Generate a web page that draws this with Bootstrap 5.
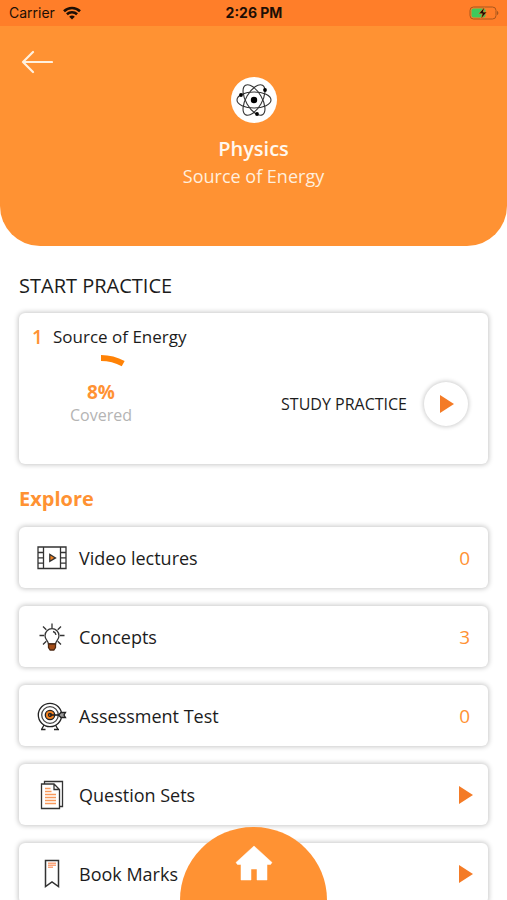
<!DOCTYPE html>
<html lang="en">
<head>
<meta charset="utf-8">
<meta name="viewport" content="width=device-width, initial-scale=1">
<title>Physics – Source of Energy</title>
<link href="https://cdn.jsdelivr.net/npm/bootstrap@5.3.0/dist/css/bootstrap.min.css" rel="stylesheet">
<style>
:root { --brand: #ff9233; --brand-dark: #ff7e29; --ink: #1c1c1c; }
body { font-family: "Open Sans", "Noto Sans", sans-serif; color: var(--ink); background: #fff; }
a { color: inherit; text-decoration: none; }
.text-brand { color: var(--brand); }
.status-bar { background: var(--brand-dark); height: 26px; padding: 0 8px 0 9px; font: 14px/26px Inter, sans-serif; color: #1d0f05; }
.hero { background: var(--brand); border-radius: 0 0 40px 40px; height: 246px; color: #fff; }
.hero-back { padding: 24px 21px 0; height: 51px; }
.subject-logo { width: 46px; height: 46px; border-radius: 50%; background: #fff; }
.subject-name { font-size: 20px; line-height: 28px; font-weight: 600; margin-top: 12px; color: #fff8ee; }
.subject-topic { font-size: 18px; line-height: 26px; color: #ffeedd; }
.page-main { padding: 24px 18px 16px; }
.section-title { font-size: 20px; line-height: 32px; margin: 0; padding-left: 1px; }
.tile { border: 0; border-radius: 6px; box-shadow: 0 0 5px 1px rgba(0,0,0,.22); background: #fff; margin: 0 1px; }
.practice { height: 151px; margin-top: 11px; margin-bottom: 19px; padding: 9px 20px 0 13px; }
.topic-line { font-size: 17px; line-height: 30px; }
.topic-number { font-size: 19px; font-weight: 600; width: 21px; }
.gauge { display: grid; width: 138px; height: 104px; justify-items: center; }
.gauge > * { grid-area: 1 / 1; }
.gauge-text { padding-top: 27px; }
.gauge-value { font-size: 19px; line-height: 26px; font-weight: 700; }
.gauge-label { font-size: 16px; line-height: 20px; color: #b4b4b4; }
.study { font-size: 16px; line-height: 24px; gap: 17px; padding: 0; color: var(--ink); height: 104px; }
.study-icon { width: 44px; height: 44px; border-radius: 50%; box-shadow: 0 0 4px 1px rgba(0,0,0,.2); }
.study-icon svg { margin-left: 2px; }
.explore-list { gap: 18px; margin-top: 12px; }
.explore-item { height: 61px; padding: 0 15px 0 17px; font-size: 18px; line-height: 26px; }
.explore-icon { width: 32px; height: 32px; margin-right: 11px; }
.explore-count { font-size: 19px; padding-right: 3px; }
.home-tab { background: var(--brand); width: 147px; height: 73px; border-radius: 74px 74px 0 0; padding-top: 18px; }
svg { display: block; flex: none; }
</style>
</head>
<body>
<header class="hero">
  <div class="status-bar row g-0">
    <div class="col d-flex align-items-center">
      <span>Carrier</span>
      <svg class="ms-2" width="18" height="14" viewBox="0 0 18 14" fill="none" stroke="#1d0f05" stroke-width="2.6" aria-label="Wi-Fi"><path d="M1 5.2C5.5.9 12.500.9 17 5.200"/><path d="M3.900 8.300c2.900-2.700 7.300-2.700 10.200 0"/><path d="M9 13.500 6.200 10.700c1.600-1.500 4-1.500 5.600 0z" fill="#1d0f05" stroke="none"/></svg>
    </div>
    <div class="col-auto fw-bold">2:26 PM</div>
    <div class="col d-flex align-items-center justify-content-end">
      <svg width="30" height="16" viewBox="0 0 30 16" aria-label="Battery charging"><rect x="1" y="2" width="26" height="12" rx="3.500" fill="none" stroke="#a9571d"/><rect x="2.500" y="3.500" width="14" height="9" rx="2" fill="#3fca5c"/><path d="M28 6c1.800.5 1.800 3.500 0 4z" fill="#a9571d"/><path d="M15.500 2 9.800 8.700h3.500L11.900 14l6-6.900h-3.600z" fill="#180c05" stroke="#ff7e29" stroke-width=".6"/></svg>
    </div>
  </div>
  <div class="hero-back"><a href="#" class="d-inline-block" aria-label="Back"><svg width="32" height="24" viewBox="0 0 32 24" fill="none" stroke="#fff1df" stroke-width="2.200" stroke-linecap="round" stroke-linejoin="round"><path d="M31 12H2M12 2 2 12l10 10"/></svg></a></div>
  <div class="d-flex flex-column align-items-center">
    <div class="subject-logo d-flex align-items-center justify-content-center">
      <svg width="38" height="38" viewBox="-19 -19 38 38" fill="none" stroke="#333" stroke-width="1.100"><ellipse rx="17" ry="8"/><ellipse rx="17" ry="8" transform="rotate(60)"/><ellipse rx="17" ry="8" transform="rotate(120)"/><g fill="#000" stroke="none"><circle r="3.200"/><circle cx="11" cy="-10" r="1.900"/><circle cx="-13" cy="-5" r="1.900"/><circle cx="3" cy="14" r="1.900"/></g></svg>
    </div>
    <div class="subject-name">Physics</div>
    <div class="subject-topic">Source of Energy</div>
  </div>
</header>

<main class="page-main">
  <h1 class="section-title fw-normal">START PRACTICE</h1>
  <section class="tile practice">
    <div class="topic-line d-flex"><span class="topic-number text-brand">1</span><span>Source of Energy</span></div>
    <div class="d-flex justify-content-between">
      <div class="gauge">
        <svg width="104" height="104" viewBox="0 0 104 104" fill="none" stroke="#ff8206" stroke-width="6" aria-hidden="true"><path d="M52 6A46 46 0 0 1 74.200 11.700"/></svg>
        <div class="gauge-text text-center"><div class="gauge-value text-brand">8%</div><div class="gauge-label">Covered</div></div>
      </div>
      <button type="button" class="study btn border-0 d-flex align-items-center rounded-0">STUDY PRACTICE
        <span class="study-icon d-flex align-items-center justify-content-center"><svg width="14" height="18" viewBox="0 0 14 18"><path d="M0 0 14 9 0 18z" fill="#f47b26"/></svg></span>
      </button>
    </div>
  </section>

  <h2 class="section-title fw-bold text-brand">Explore</h2>
  <nav class="explore-list d-flex flex-column">
    <a href="#" class="tile explore-item d-flex align-items-center">
      <svg class="explore-icon" viewBox="0 0 32 32" fill="none" stroke="#333" stroke-width="1.300"><path d="M2 5h28v21.500H2zM7.500 5v21.500M24.500 5v21.500M2 10.500h5.500M2 15.800h5.500M2 21.200h5.500M24.500 10.500H30M24.500 15.800H30M24.500 21.200H30"/><path d="M13.800 12.500v6.800l5.700-3.400z" fill="#f58220"/></svg>
      <span class="flex-grow-1">Video lectures</span><span class="explore-count text-brand">0</span>
    </a>
    <a href="#" class="tile explore-item d-flex align-items-center">
      <svg class="explore-icon" viewBox="0 0 32 32" fill="none" stroke="#333" stroke-width="1.300"><path d="M16 2.500v4.500M7 5.500l3.300 3.300M25 5.500l-3.300 3.300M3.500 14.500H8M24 14.500h4.500M7 23.500l3.300-3.300M25 23.500l-3.300-3.300"/><path d="M12.500 23c0-3-3.500-4.200-3.500-8.300a7 7 0 0 1 14 0c0 4.100-3.500 5.300-3.500 8.300z"/><path d="M17 10.500q2.500.6 3 3.300"/><path d="M12.500 23h7v3.500L17.800 29h-3.600l-1.700-2.500z" fill="#a34d18" stroke="#4e2a14"/></svg>
      <span class="flex-grow-1">Concepts</span><span class="explore-count text-brand">3</span>
    </a>
    <a href="#" class="tile explore-item d-flex align-items-center">
      <svg class="explore-icon" viewBox="0 0 32 32" fill="none" stroke="#222" stroke-width="1.300"><path d="m8 25-2.500 4.500M19.500 25l2.500 4.500M5 29.500h4.500M18 29.500h5"/><circle cx="14" cy="15" r="11.700" fill="#fff"/><circle cx="14" cy="15" r="8.300" stroke="#444"/><circle cx="14" cy="15" r="4.700" fill="#f58220"/><circle cx="14" cy="15" r="1.500"/><path d="M14 15h13" stroke-width="1.600"/><path d="M22.500 15 25 12.500h4.500L28 15l1.500 2.500H25z" fill="#999"/></svg>
      <span class="flex-grow-1">Assessment Test</span><span class="explore-count text-brand">0</span>
    </a>
    <a href="#" class="tile explore-item d-flex align-items-center">
      <svg class="explore-icon" viewBox="0 0 32 32" fill="none" stroke="#333" stroke-width="1.300"><path d="M8.500 5V2.500H26.500V27.500H23.500"/><path d="M5.500 5H18l5.500 5.500V29.500h-18zM18 5v5.500h5.500"/><path d="M9 9.500h5.500M9 12.500h6.500M9 15.500h11M9 18.500h11M9 21.500h11M9 24.500h11" stroke="#f99a5c"/></svg>
      <span class="flex-grow-1">Question Sets</span><svg width="14" height="18" viewBox="0 0 14 18"><path d="M0 0 14 9 0 18z" fill="#f47b26"/></svg>
    </a>
    <a href="#" class="tile explore-item d-flex align-items-center">
      <svg class="explore-icon" viewBox="0 0 32 32" fill="none" stroke="#333" stroke-width="1.500"><path d="M9.500 2.500h13v26L16 24l-6.500 4.500z"/><path d="M12 5.200h8M12 7.200h8M12 9.200h5" stroke="#fba47a"/></svg>
      <span class="flex-grow-1">Book Marks</span><svg width="14" height="18" viewBox="0 0 14 18"><path d="M0 0 14 9 0 18z" fill="#f47b26"/></svg>
    </a>
  </nav>
</main>

<a href="#" class="home-tab fixed-bottom mx-auto d-flex justify-content-center" aria-label="Home"><svg width="38" height="36" viewBox="0 0 38 36"><path d="M19 1 1 17.500 2.500 19.500H6V35h10V24h6v11h10V19.500h3.500L37 17.500z" fill="#fff" stroke="#fff" stroke-width=".5" stroke-linejoin="round"/></svg></a>
<script src="https://cdn.jsdelivr.net/npm/bootstrap@5.3.0/dist/js/bootstrap.bundle.min.js"></script>
</body>
</html>
